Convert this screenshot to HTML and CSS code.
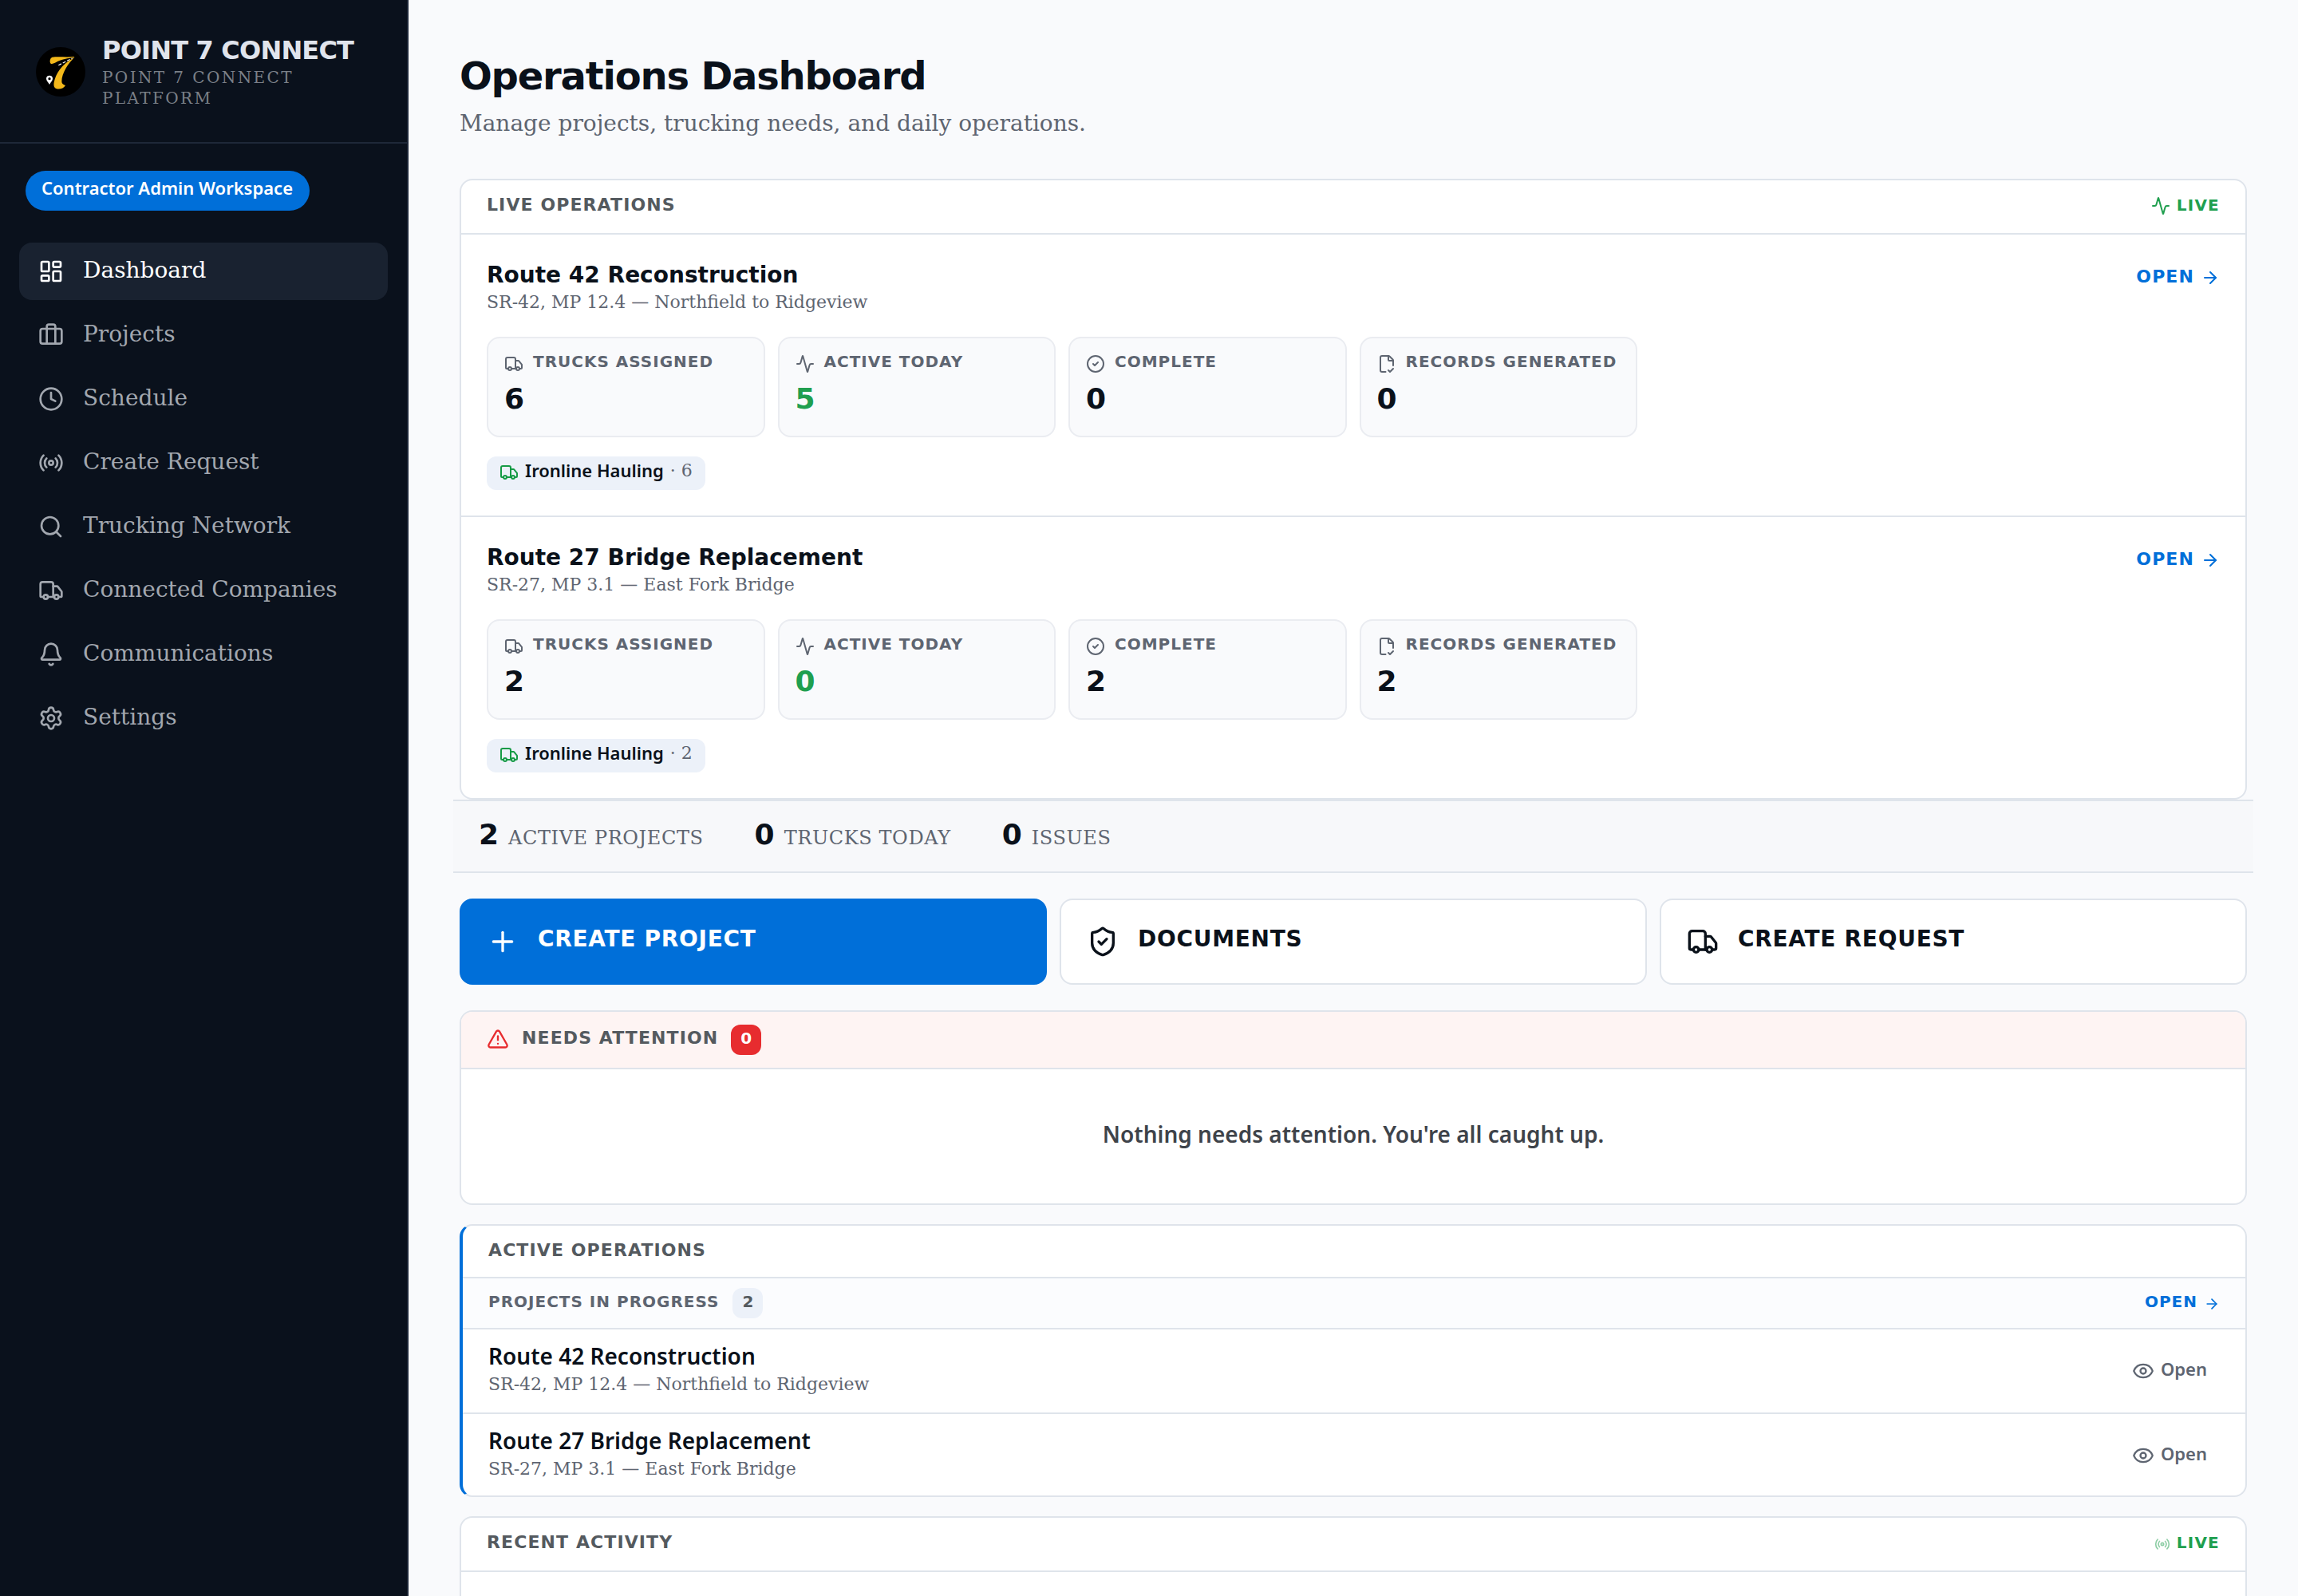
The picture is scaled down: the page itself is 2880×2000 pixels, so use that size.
FILE: index.html
```html
<!DOCTYPE html>
<html lang="en">
<head>
<meta charset="utf-8">
<title>Operations Dashboard</title>
<link rel="stylesheet" href="styles.css">
</head>
<body>
<svg class="sprite" aria-hidden="true">
  <symbol id="i-dashboard" viewBox="0 0 24 24"><rect width="7" height="9" x="3" y="3" rx="1"/><rect width="7" height="5" x="14" y="3" rx="1"/><rect width="7" height="9" x="14" y="12" rx="1"/><rect width="7" height="5" x="3" y="16" rx="1"/></symbol>
  <symbol id="i-briefcase" viewBox="0 0 24 24"><path d="M16 20V4a2 2 0 0 0-2-2h-4a2 2 0 0 0-2 2v16"/><rect width="20" height="14" x="2" y="6" rx="2"/></symbol>
  <symbol id="i-clock" viewBox="0 0 24 24"><circle cx="12" cy="12" r="10"/><path d="M12 6v6l4 2"/></symbol>
  <symbol id="i-radio" viewBox="0 0 24 24"><path d="M16.247 7.761a6 6 0 0 1 0 8.478"/><path d="M19.075 4.933a10 10 0 0 1 0 14.134"/><path d="M4.925 19.067a10 10 0 0 1 0-14.134"/><path d="M7.753 16.239a6 6 0 0 1 0-8.478"/><circle cx="12" cy="12" r="2"/></symbol>
  <symbol id="i-search" viewBox="0 0 24 24"><circle cx="11" cy="11" r="8"/><path d="m21 21-4.34-4.34"/></symbol>
  <symbol id="i-truck" viewBox="0 0 24 24"><path d="M14 18V6a2 2 0 0 0-2-2H4a2 2 0 0 0-2 2v11a1 1 0 0 0 1 1h2"/><path d="M15 18H9"/><path d="M19 18h2a1 1 0 0 0 1-1v-3.65a1 1 0 0 0-.22-.624l-3.48-4.35A1 1 0 0 0 17.52 8H14"/><circle cx="17" cy="18" r="2"/><circle cx="7" cy="18" r="2"/></symbol>
  <symbol id="i-bell" viewBox="0 0 24 24"><path d="M10.268 21a2 2 0 0 0 3.464 0"/><path d="M3.262 15.326A1 1 0 0 0 4 17h16a1 1 0 0 0 .74-1.673C19.41 13.956 18 12.499 18 8A6 6 0 0 0 6 8c0 4.499-1.411 5.956-2.738 7.326"/></symbol>
  <symbol id="i-settings" viewBox="0 0 24 24"><path d="M9.671 4.136a2.34 2.34 0 0 1 4.659 0 2.34 2.34 0 0 0 3.319 1.915 2.34 2.34 0 0 1 2.33 4.033 2.34 2.34 0 0 0 0 3.831 2.34 2.34 0 0 1-2.33 4.033 2.34 2.34 0 0 0-3.319 1.915 2.34 2.34 0 0 1-4.659 0 2.34 2.34 0 0 0-3.32-1.915 2.34 2.34 0 0 1-2.33-4.033 2.34 2.34 0 0 0 0-3.831A2.34 2.34 0 0 1 6.35 6.051a2.34 2.34 0 0 0 3.319-1.915"/><circle cx="12" cy="12" r="3"/></symbol>
  <symbol id="i-activity" viewBox="0 0 24 24"><path d="M22 12h-2.48a2 2 0 0 0-1.93 1.46l-2.35 8.36a.25.25 0 0 1-.48 0L9.24 2.18a.25.25 0 0 0-.48 0l-2.35 8.36A2 2 0 0 1 4.49 12H2"/></symbol>
  <symbol id="i-check" viewBox="0 0 24 24"><circle cx="12" cy="12" r="10"/><path d="m9 12 2 2 4-4"/></symbol>
  <symbol id="i-file" viewBox="0 0 24 24"><path d="M10.5 22H6a2 2 0 0 1-2-2V4a2 2 0 0 1 2-2h8a2.4 2.4 0 0 1 1.706.706l3.588 3.588A2.4 2.4 0 0 1 20 8v6"/><path d="M14 2v5a1 1 0 0 0 1 1h5"/><path d="m14 20 2 2 4-4"/></symbol>
  <symbol id="i-arrow" viewBox="0 0 24 24"><path d="M5 12h14"/><path d="m12 5 7 7-7 7"/></symbol>
  <symbol id="i-plus" viewBox="0 0 24 24"><path d="M5 12h14"/><path d="M12 5v14"/></symbol>
  <symbol id="i-shield" viewBox="0 0 24 24"><path d="M20 13c0 5-3.5 7.5-7.66 8.95a1 1 0 0 1-.67-.01C7.5 20.5 4 18 4 13V6a1 1 0 0 1 1-1c2 0 4.5-1.2 6.24-2.72a1.17 1.17 0 0 1 1.52 0C14.51 3.81 17 5 19 5a1 1 0 0 1 1 1z"/><path d="m9 12 2 2 4-4"/></symbol>
  <symbol id="i-alert" viewBox="0 0 24 24"><path d="m21.73 18-8-14a2 2 0 0 0-3.48 0l-8 14A2 2 0 0 0 4 21h16a2 2 0 0 0 1.73-3"/><path d="M12 9v4"/><path d="M12 17h.01"/></symbol>
  <symbol id="i-eye" viewBox="0 0 24 24"><path d="M2.062 12.348a1 1 0 0 1 0-.696 10.75 10.75 0 0 1 19.876 0 1 1 0 0 1 0 .696 10.75 10.75 0 0 1-19.876 0"/><circle cx="12" cy="12" r="3"/></symbol>
</svg>
<div class="app">
  <aside class="sidebar">
    <div class="brand">
      <svg class="brand-logo" viewBox="27 27 186 186">
        <circle cx="120" cy="120" r="93" fill="#000"/>
        <path fill="#f3b81a" d="M88 65C110 62 145 66 170 63L172 66C150 68 120 74 103 84C96 88 88 91 83 89C78 84 79 69 88 65Z"/>
        <path fill="#f3b81a" d="M172 66C150 85 124 125 124 156C124 165 130 169 138 171C132 182 117 187 105 184C95 181 93 172 95 160C101 128 122 93 168 68Z"/>
        <path fill="none" stroke="#fff" stroke-width="3.5" stroke-dasharray="12 6" d="M112 95L164 69"/>
        <path fill="#fff" fill-rule="evenodd" d="M78 168C74 159 66 154 66 146A12 12 0 0 1 90 146C90 154 82 159 78 168ZM78 141A5 5 0 1 0 78 151A5 5 0 1 0 78 141Z"/>
      </svg>
      <div class="brand-text">
        <div class="brand-name">POINT 7 CONNECT</div>
        <div class="brand-sub">POINT 7 CONNECT PLATFORM</div>
      </div>
    </div>
    <div class="workspace"><span>Contractor Admin Workspace</span></div>
    <nav class="nav">
      <a class="nav-item active"><svg class="icon"><use href="#i-dashboard"/></svg><span>Dashboard</span></a>
      <a class="nav-item"><svg class="icon"><use href="#i-briefcase"/></svg><span>Projects</span></a>
      <a class="nav-item"><svg class="icon"><use href="#i-clock"/></svg><span>Schedule</span></a>
      <a class="nav-item"><svg class="icon"><use href="#i-radio"/></svg><span>Create Request</span></a>
      <a class="nav-item"><svg class="icon"><use href="#i-search"/></svg><span>Trucking Network</span></a>
      <a class="nav-item"><svg class="icon"><use href="#i-truck"/></svg><span>Connected Companies</span></a>
      <a class="nav-item"><svg class="icon"><use href="#i-bell"/></svg><span>Communications</span></a>
      <a class="nav-item"><svg class="icon"><use href="#i-settings"/></svg><span>Settings</span></a>
    </nav>
  </aside>

  <main class="main">
    <header class="page-head">
      <h1>Operations Dashboard</h1>
      <p>Manage projects, trucking needs, and daily operations.</p>
    </header>

    <section class="card">
      <div class="card-head">
        <h2>LIVE OPERATIONS</h2>
        <div class="live"><svg class="icon"><use href="#i-activity"/></svg><span>LIVE</span></div>
      </div>
      <article class="project">
        <div class="project-top">
          <div>
            <h3>Route 42 Reconstruction</h3>
            <p class="loc">SR-42, MP 12.4 — Northfield to Ridgeview</p>
          </div>
          <a class="open-link"><span>OPEN</span><svg class="icon"><use href="#i-arrow"/></svg></a>
        </div>
        <div class="stats">
          <div class="stat"><div class="stat-label"><svg class="icon"><use href="#i-truck"/></svg><span>TRUCKS ASSIGNED</span></div><div class="stat-value">6</div></div>
          <div class="stat"><div class="stat-label"><svg class="icon"><use href="#i-activity"/></svg><span>ACTIVE TODAY</span></div><div class="stat-value green">5</div></div>
          <div class="stat"><div class="stat-label"><svg class="icon"><use href="#i-check"/></svg><span>COMPLETE</span></div><div class="stat-value">0</div></div>
          <div class="stat"><div class="stat-label"><svg class="icon"><use href="#i-file"/></svg><span>RECORDS GENERATED</span></div><div class="stat-value">0</div></div>
        </div>
        <div class="chip"><svg class="icon"><use href="#i-truck"/></svg><span class="chip-name">Ironline Hauling</span><span class="chip-count">· 6</span></div>
      </article>
      <article class="project">
        <div class="project-top">
          <div>
            <h3>Route 27 Bridge Replacement</h3>
            <p class="loc">SR-27, MP 3.1 — East Fork Bridge</p>
          </div>
          <a class="open-link"><span>OPEN</span><svg class="icon"><use href="#i-arrow"/></svg></a>
        </div>
        <div class="stats">
          <div class="stat"><div class="stat-label"><svg class="icon"><use href="#i-truck"/></svg><span>TRUCKS ASSIGNED</span></div><div class="stat-value">2</div></div>
          <div class="stat"><div class="stat-label"><svg class="icon"><use href="#i-activity"/></svg><span>ACTIVE TODAY</span></div><div class="stat-value green">0</div></div>
          <div class="stat"><div class="stat-label"><svg class="icon"><use href="#i-check"/></svg><span>COMPLETE</span></div><div class="stat-value">2</div></div>
          <div class="stat"><div class="stat-label"><svg class="icon"><use href="#i-file"/></svg><span>RECORDS GENERATED</span></div><div class="stat-value">2</div></div>
        </div>
        <div class="chip"><svg class="icon"><use href="#i-truck"/></svg><span class="chip-name">Ironline Hauling</span><span class="chip-count">· 2</span></div>
      </article>
    </section>

    <div class="summary">
      <div class="summary-item"><b>2</b><span>ACTIVE PROJECTS</span></div>
      <div class="summary-item"><b>0</b><span>TRUCKS TODAY</span></div>
      <div class="summary-item"><b>0</b><span>ISSUES</span></div>
    </div>

    <div class="actions">
      <a class="action primary"><svg class="icon"><use href="#i-plus"/></svg><span>CREATE PROJECT</span></a>
      <a class="action"><svg class="icon"><use href="#i-shield"/></svg><span>DOCUMENTS</span></a>
      <a class="action"><svg class="icon"><use href="#i-truck"/></svg><span>CREATE REQUEST</span></a>
    </div>

    <section class="card attention">
      <div class="card-head">
        <svg class="icon"><use href="#i-alert"/></svg>
        <h2>NEEDS ATTENTION</h2>
        <div class="count red"><span>0</span></div>
      </div>
      <div class="empty"><span>Nothing needs attention. You're all caught up.</span></div>
    </section>

    <section class="card active-ops">
      <div class="card-head"><h2>ACTIVE OPERATIONS</h2></div>
      <div class="sub-head">
        <h4>PROJECTS IN PROGRESS</h4>
        <div class="count"><span>2</span></div>
        <a class="open-link small"><span>OPEN</span><svg class="icon"><use href="#i-arrow"/></svg></a>
      </div>
      <div class="row">
        <div class="row-text">
          <div class="row-title">Route 42 Reconstruction</div>
          <p class="loc">SR-42, MP 12.4 — Northfield to Ridgeview</p>
        </div>
        <a class="view"><svg class="icon"><use href="#i-eye"/></svg><span>Open</span></a>
      </div>
      <div class="row">
        <div class="row-text">
          <div class="row-title">Route 27 Bridge Replacement</div>
          <p class="loc">SR-27, MP 3.1 — East Fork Bridge</p>
        </div>
        <a class="view"><svg class="icon"><use href="#i-eye"/></svg><span>Open</span></a>
      </div>
    </section>

    <section class="card recent">
      <div class="card-head">
        <h2>RECENT ACTIVITY</h2>
        <div class="live faint"><svg class="icon"><use href="#i-radio"/></svg><span>LIVE</span></div>
      </div>
    </section>
  </main>
</div>
</body>
</html>
```
FILE: styles.css
```css
:root {
  --serif: "DejaVu Serif", serif;
  --display: "DejaVu Sans", sans-serif;
  --sans: "Noto Sans", sans-serif;
  --blue: #006fd9;
  --green: #209f4f;
  --ink: #0a111a;
  --muted: #5e6571;
  --heading: #545a5f;
  --line: #dfe4eb;
  --bg: #f9fafc;
}

* { box-sizing: border-box; margin: 0; }

body {
  font-family: var(--serif);
  color: var(--ink);
  background: var(--bg);
  width: 2880px;
  height: 2000px;
  overflow: hidden;
}

.sprite { display: none; }

.icon {
  width: 24px;
  height: 24px;
  flex: none;
  display: block;
  fill: none;
  stroke: currentColor;
  stroke-width: 2;
  stroke-linecap: round;
  stroke-linejoin: round;
}

.app { display: flex; height: 2000px; }

/* Sidebar */
.sidebar {
  flex: none;
  width: 512px;
  background: #0a111c;
  border-right: 2px solid #1e2838;
}

.brand {
  display: flex;
  align-items: center;
  gap: 21px;
  height: 180px;
  padding: 2px 40px 0 45px;
  border-bottom: 2px solid #1e2838;
}

.brand-logo { width: 62px; height: 62px; flex: none; }
.brand-text { padding-bottom: 2px; }

.brand-name {
  font: bold 32px/40px var(--display);
  letter-spacing: -0.8px;
  color: #e0e4ec;
  white-space: nowrap;
}

.brand-sub {
  margin-top: 1px;
  font-size: 20px;
  line-height: 26px;
  letter-spacing: 2.4px;
  color: #7b8088;
}

.workspace {
  display: flex;
  align-items: center;
  width: fit-content;
  height: 50px;
  margin: 34px 0 40px 32px;
  padding: 0 21px 9px 20px;
  border-radius: 25px;
  background: var(--blue);
  color: #fff;
  font: 600 22px/30px var(--sans);
}

.nav {
  display: flex;
  flex-direction: column;
  gap: 8px;
  padding: 0 24px;
}

.nav-item {
  display: flex;
  align-items: center;
  gap: 24px;
  height: 72px;
  padding: 0 24px;
  border-radius: 16px;
  color: #a2a7af;
  font-size: 28px;
  line-height: 40px;
}

.nav-item .icon { width: 32px; height: 32px; }
.nav-item span { padding-bottom: 2px; }
.nav-item.active { background: #192230; color: #fff; }

/* Main column */
.main { flex: 1; padding: 64px 64px 0; }

.page-head { height: 160px; }

.page-head h1 {
  font: bold 48px/62px var(--display);
  letter-spacing: -1.2px;
}

.page-head p {
  margin-top: 7px;
  font-size: 28px;
  line-height: 44px;
  color: var(--muted);
}

.card {
  background: #fff;
  border: 2px solid var(--line);
  border-radius: 16px;
  overflow: hidden;
}

.card-head {
  display: flex;
  align-items: center;
  justify-content: space-between;
  height: 68px;
  padding: 0 32px;
  border-bottom: 2px solid var(--line);
}

.card-head h2 {
  padding-bottom: 5px;
  font: bold 22px/30px var(--display);
  letter-spacing: 1.1px;
  color: var(--heading);
}

.live {
  display: flex;
  align-items: center;
  gap: 8px;
  padding-bottom: 2px;
  color: var(--green);
  font: bold 20px/28px var(--display);
  letter-spacing: 1.2px;
}

.live span { padding-bottom: 2px; }

.project { padding: 32px; }
.project + .project { border-top: 2px solid var(--line); }

.project-top { display: flex; justify-content: space-between; }

.project h3 { font: bold 28px/38px var(--display); }

.loc {
  font-size: 22px;
  line-height: 30px;
  color: var(--muted);
}

.open-link {
  display: flex;
  align-items: center;
  gap: 8px;
  height: 44px;
  color: var(--blue);
  font: bold 22px/30px var(--display);
  letter-spacing: 1.1px;
}

.open-link span { padding-bottom: 3px; }

.stats {
  display: grid;
  grid-template-columns: repeat(4, 1fr);
  gap: 16px;
  width: 1442px;
  margin-top: 28px;
}

.stat {
  height: 126px;
  padding: 20px 20px 0;
  background: var(--bg);
  border: 2px solid #eaecf1;
  border-radius: 16px;
}

.stat-label {
  display: flex;
  align-items: center;
  gap: 12px;
  height: 24px;
  color: var(--muted);
  font: bold 20px/24px var(--display);
  letter-spacing: 1px;
  white-space: nowrap;
}

.stat-label span { padding-bottom: 6px; }

.stat-value {
  margin-top: 10px;
  font: bold 36px/44px var(--display);
}

.green { color: var(--green); }

.chip {
  display: flex;
  align-items: center;
  width: fit-content;
  height: 42px;
  margin-top: 24px;
  padding: 0 16px 2px;
  border-radius: 12px;
  background: #ecf1f9;
}

.chip .icon { color: #169b46; }

.chip-name {
  margin-left: 8px;
  padding-bottom: 7px;
  font: 600 22px/30px var(--sans);
}

.chip-count {
  margin-left: 8px;
  padding-bottom: 5px;
  font-size: 22px;
  line-height: 30px;
  color: var(--muted);
}

/* Summary strip */
.summary {
  display: flex;
  gap: 64px;
  height: 92px;
  margin: 0 -8px;
  padding: 20px 32px 0;
  background: #f7f8fa;
  border-top: 2px solid var(--line);
  border-bottom: 2px solid var(--line);
}

.summary-item { display: flex; align-items: baseline; gap: 12px; }
.summary-item b { font: bold 36px/44px var(--display); }

.summary-item span {
  font-size: 24px;
  line-height: 32px;
  letter-spacing: 0.6px;
  color: var(--muted);
}

/* Quick actions */
.actions {
  display: grid;
  grid-template-columns: repeat(3, 1fr);
  gap: 16px;
  margin: 32px 0;
}

.action {
  display: flex;
  align-items: center;
  gap: 24px;
  height: 108px;
  padding: 0 32px;
  background: #fff;
  border: 2px solid var(--line);
  border-radius: 16px;
  font: bold 28px/40px var(--display);
  letter-spacing: 0.7px;
}

.action.primary { background: var(--blue); border-color: var(--blue); color: #fff; }
.action .icon { width: 40px; height: 40px; }
.action span { padding-bottom: 7px; }

/* Needs attention */
.attention .card-head {
  height: 72px;
  justify-content: flex-start;
  gap: 16px;
  background: #fef4f3;
}

.attention .card-head h2 { padding-bottom: 4px; }
.attention .icon { width: 28px; height: 28px; color: #e72c2f; margin-bottom: 2px; }

.count {
  display: flex;
  align-items: center;
  justify-content: center;
  width: 38px;
  height: 38px;
  border-radius: 12px;
  background: #ecf1f9;
  color: var(--heading);
  font: bold 20px/28px var(--display);
}

.count span { padding-bottom: 4px; }
.count.red { background: #e72c2f; color: #fff; }

.empty {
  display: flex;
  align-items: center;
  justify-content: center;
  height: 168px;
  padding-bottom: 6px;
  color: #3e434a;
  font: 600 28px/40px var(--sans);
}

/* Active operations */
.active-ops { margin-top: 24px; border-left: 4px solid var(--blue); }
.active-ops .card-head { height: 66px; }
.active-ops .card-head h2 { padding-bottom: 3px; }

.sub-head {
  display: flex;
  align-items: center;
  gap: 16px;
  height: 64px;
  padding: 0 32px;
  background: #fbfcfe;
  border-bottom: 2px solid var(--line);
}

.sub-head .count { margin-left: 1px; }

.sub-head h4 {
  padding-bottom: 4px;
  font: bold 20px/28px var(--display);
  letter-spacing: 1px;
  color: var(--muted);
}

.open-link.small { margin-left: auto; font-size: 20px; letter-spacing: 1px; padding-top: 2px; }
.open-link.small .icon { width: 20px; height: 20px; }
.open-link.small span { padding-bottom: 6px; }

.row {
  display: flex;
  align-items: center;
  justify-content: space-between;
  height: 106px;
  padding: 0 32px;
  border-bottom: 2px solid var(--line);
}

.row:last-child { height: 104px; margin-bottom: -2px; border-bottom: 0; }
.row-text { padding-bottom: 4px; }

.row-title { margin-top: -2px; padding-bottom: 2px; font: 600 28px/38px var(--sans); }

.view {
  display: flex;
  align-items: center;
  gap: 8px;
  padding-right: 16px;
  color: var(--muted);
  font: 600 22px/30px var(--sans);
}

.view .icon { width: 28px; height: 28px; }
.view span { padding-bottom: 6px; }

/* Recent activity */
.recent {
  height: 100px;
  margin-top: 24px;
  border-bottom: 0;
  border-radius: 16px 16px 0 0;
}

.live.faint { padding-bottom: 0; }
.live.faint .icon { width: 20px; height: 20px; opacity: 0.5; }
.live.faint span { padding-bottom: 4px; }
```
